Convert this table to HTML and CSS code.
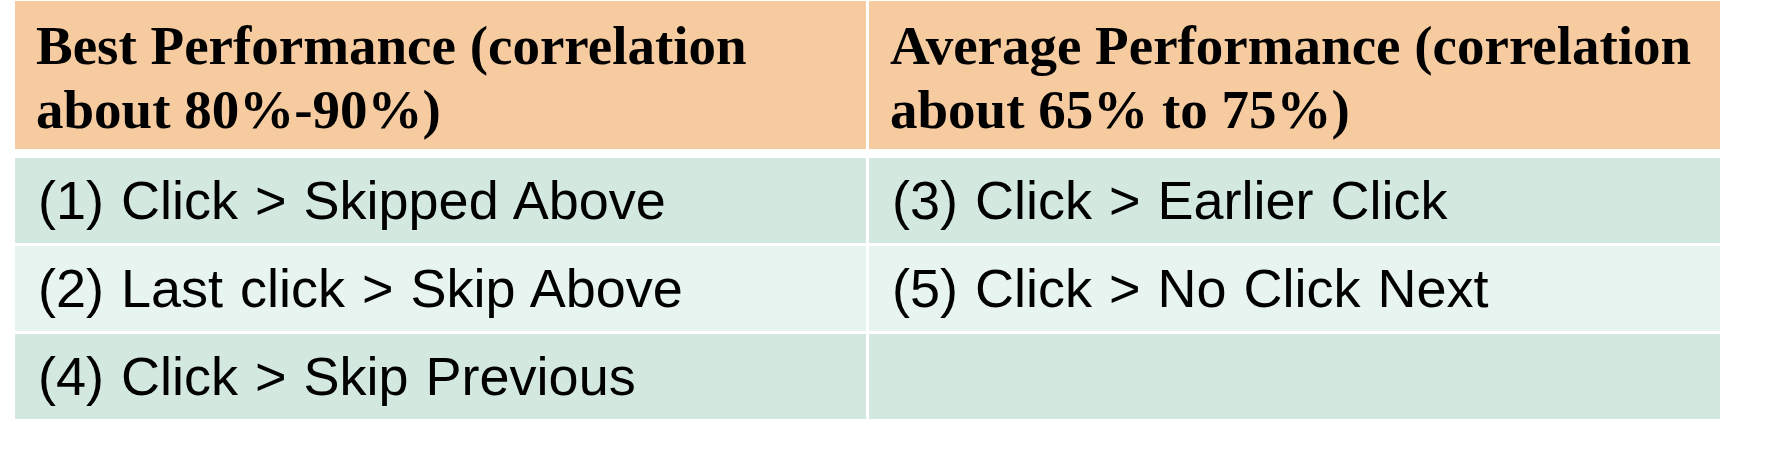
FILE: index.html
```html
<!DOCTYPE html>
<html lang="en">
<head>
<meta charset="utf-8">
<title>Performance table</title>
<link rel="stylesheet" href="styles.css">
</head>
<body>
<div class="table">
  <div class="cell head">Best Performance (correlation about 80%-90%)</div>
  <div class="cell head">Average Performance (correlation about 65% to 75%)</div>
  <div class="cell body dark">(1) Click &gt; Skipped Above</div>
  <div class="cell body dark">(3) Click &gt; Earlier Click</div>
  <div class="cell body light">(2) Last click &gt; Skip Above</div>
  <div class="cell body light">(5) Click &gt; No Click Next</div>
  <div class="cell body dark">(4) Click &gt; Skip Previous</div>
  <div class="cell body dark"></div>
</div>
</body>
</html>
```

FILE: styles.css
```css
html, body {
  margin: 0;
  padding: 0;
  background: #ffffff;
}

body {
  padding: 1px 0 0 15px;
}

.table {
  display: grid;
  grid-template-columns: 851px 851px;
  column-gap: 3px;
  row-gap: 3px;
}

.cell {
  box-sizing: border-box;
  color: #000000;
}

.head {
  background: #f6cba0;
  font-family: "Liberation Serif", "Times New Roman", serif;
  font-weight: bold;
  font-size: 55px;
  line-height: 64px;
  padding: 13px 21px 7px 21px;
  height: 148px;
  margin-bottom: 6px;
}

.body {
  font-family: "Liberation Sans", Arial, sans-serif;
  font-size: 54px;
  line-height: 62px;
  word-spacing: 2px;
  padding: 11px 21px 9px 23px;
  height: 85px;
  white-space: nowrap;
}

.dark {
  background: #d3e9e0;
}

.light {
  background: #e8f4ef;
}
```
